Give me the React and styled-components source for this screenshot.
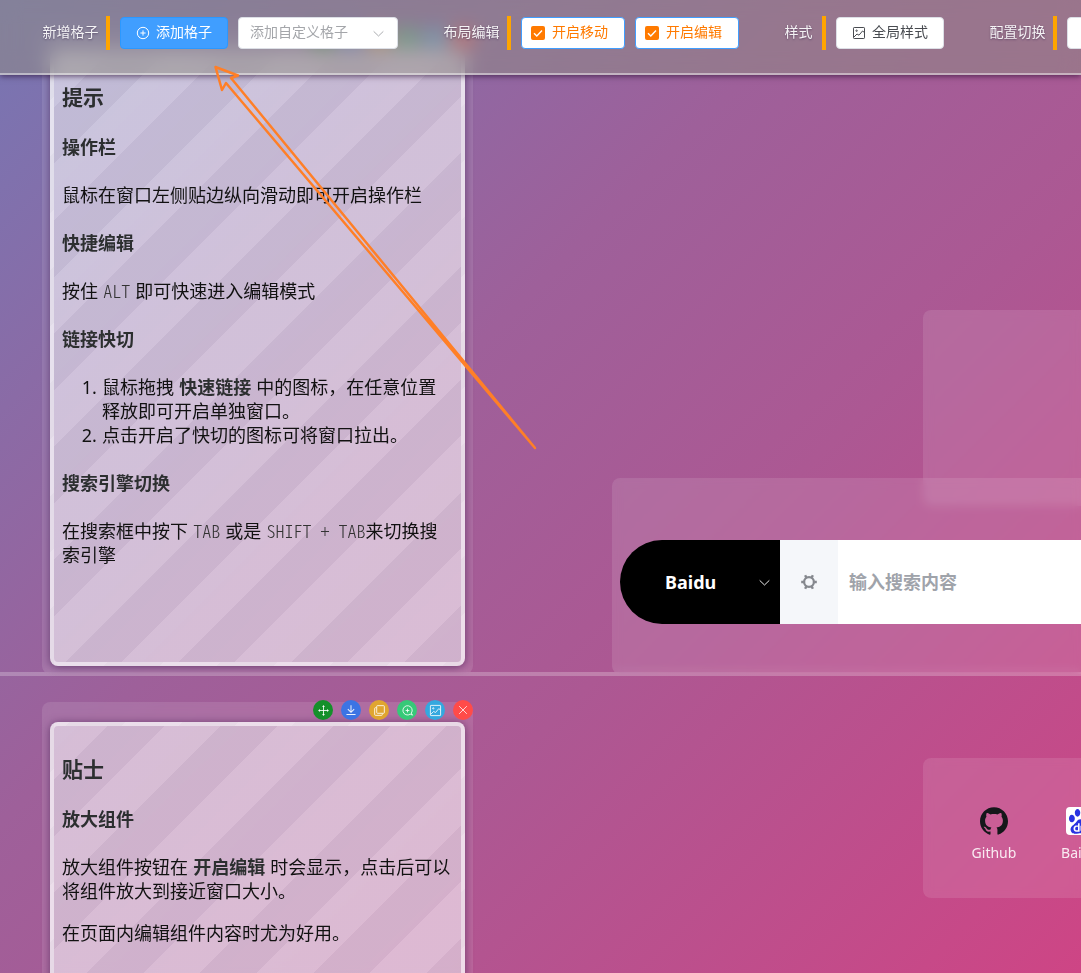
import React from "react";
import styled, { createGlobalStyle } from "styled-components";
import { SiGithub, SiBaidu } from "react-icons/si";

const Global = createGlobalStyle`
  * { box-sizing: border-box; }
  body {
    margin: 0;
    overflow: hidden;
    font-family: "Noto Sans", "Noto Sans CJK SC", sans-serif;
  }
`;

const Page = styled.div`
  position: relative;
  height: 973px;
  overflow: hidden;
  background: linear-gradient(135deg, #7776b3 0%, #8a6ba6 20%, #9e609a 40%, #ac5893 62%, #ce4585 100%);
`;

const Dashboard = styled.main`
  display: grid;
  grid-template-columns: 42px 431px 139px 311px 500px;
  grid-template-rows: 30px 280px 168px 28px 168px 28px 56px 140px 334.5px;
`;

const PageEdge = styled.div`
  grid-column: 1 / -1;
  grid-row: 5 / 7;
  align-self: end;
  height: 4px;
  margin-bottom: 26px;
  background: rgba(255, 255, 255, 0.24);
`;

const Cell = styled.section`
  grid-column: ${(p) => p.$col};
  grid-row: ${(p) => p.$row};
  border-radius: 8px;
  background: rgba(255, 255, 255, 0.11);
  backdrop-filter: blur(5px);
`;

const NoteCell = styled(Cell)`
  position: relative;
  padding: 20px 8px 8px;
`;

const Note = styled.article`
  height: 100%;
  padding: 29px 8px 0;
  border: 4px solid rgba(255, 255, 255, 0.5);
  border-radius: 8px;
  color: #111;
  font-size: 18px;
  line-height: 24px;
  word-spacing: 0.5px;
  box-shadow: 0 1px 8px rgba(50, 15, 65, 0.55);
  background: repeating-linear-gradient(
    -45deg,
    rgba(233, 232, 238, 0.56) 0 40px,
    rgba(250, 250, 253, 0.56) 40px 80px
  );
`;

const NoteTitle = styled.h3`
  margin: 0 0 24px;
  color: #2c2f30;
  font-size: 21px;
  line-height: 28px;
`;

const NoteHeading = styled.h4`
  margin: 24px 0;
  color: #2c2f30;
  font-size: 18px;
  line-height: 24px;
`;

const Paragraph = styled.p`
  margin: 18px 0;
  white-space: nowrap;
`;

const Steps = styled.ol`
  margin: 18px 0;
  padding-left: 40px;
  white-space: nowrap;
`;

const Key = styled.code`
  color: #333;
  font-family: "Noto Sans CJK SC", monospace;
  font-size: 18px;
  font-weight: 300;
  font-feature-settings: "hwid" 1;
  line-height: 0;
  word-spacing: 0;
`;

const Strong = styled.b`
  color: #2c2f30;
`;

const Actions = styled.div`
  position: absolute;
  top: -2px;
  right: 0;
  display: flex;
  gap: 8px;
`;

const Action = styled.span`
  display: flex;
  align-items: center;
  justify-content: center;
  width: 20px;
  height: 20px;
  border-radius: 50%;
  color: rgba(255, 255, 255, 0.9);
  background: ${(p) => p.$color};
`;

const SearchCell = styled(Cell)`
  display: flex;
  align-items: center;
  padding: 12px 8px 0;
`;

const SearchBar = styled.div`
  display: flex;
  flex: 1;
  height: 84px;
  font-size: 18px;
  font-weight: 700;
`;

const Engine = styled.div`
  display: flex;
  align-items: center;
  justify-content: space-between;
  width: 160px;
  padding: 0 9px 0 45px;
  border-radius: 42px 0 0 42px;
  color: #fff;
  background: #000;
`;

const GearBox = styled.div`
  display: flex;
  align-items: center;
  justify-content: center;
  width: 58px;
  color: #85888e;
  background: #f5f7fa;
`;

const Query = styled.div`
  display: flex;
  flex: 1;
  align-items: center;
  padding: 0 0 2px 11px;
  color: #9fa3aa;
  background: #fff;
`;

const LinksCell = styled(Cell)`
  display: flex;
  padding: 49px 28px 0;
`;

const Link = styled.a`
  display: flex;
  flex-direction: column;
  align-items: center;
  gap: 8px;
  width: 86px;
  color: rgba(255, 255, 255, 0.88);
  font-size: 14px;
  line-height: 20px;
`;

const LinkIcon = styled.span`
  display: flex;
  align-items: center;
  justify-content: center;
  width: 28px;
  height: 28px;
  border-radius: 4px;
  color: ${(p) => p.$color};
  background: ${(p) => p.$bg || "transparent"};
`;

const Toolbar = styled.header`
  position: absolute;
  top: 0;
  left: 0;
  z-index: 2;
  display: flex;
  align-items: flex-start;
  gap: 45.5px;
  width: 100%;
  height: 75px;
  padding: 16px 0 0 42.5px;
  border-bottom: 2px solid rgba(255, 255, 255, 0.45);
  background: rgba(143, 139, 133, 0.53);
  backdrop-filter: blur(10px);
  box-shadow: 0 1px 6px rgba(30, 0, 40, 0.65);
  font-size: 14px;
  white-space: nowrap;
`;

const ToolGroup = styled.div`
  display: flex;
  flex: none;
  align-items: center;
  gap: 10px;
  height: 34px;
`;

const GroupLabel = styled.div`
  flex: none;
  width: ${(p) => p.$width}px;
  height: 34px;
  border-right: 4px solid #ffa500;
  color: rgba(255, 255, 255, 0.92);
  line-height: 32px;
  text-shadow: 0 1px 2px rgba(50, 30, 70, 0.5);
`;

const Button = styled.div`
  display: flex;
  flex: none;
  align-items: center;
  justify-content: center;
  gap: 6px;
  width: ${(p) => p.$width || 108}px;
  height: 32px;
  border: 1px solid ${(p) => p.$border || "#dcdfe6"};
  border-radius: 4px;
  color: ${(p) => p.$color || "#484b50"};
  background: ${(p) => p.$bg || "#fff"};
  line-height: 28px;
`;

const Caption = styled.span`
  padding-bottom: 2px;
`;

const ToggleButton = styled(Button)`
  gap: 7px;
  padding-right: 7px;
`;

const Select = styled(Button)`
  justify-content: space-between;
  padding: 0 12px 0 11px;
  color: #a4a6aa;
`;

const Checkbox = styled.span`
  display: flex;
  align-items: center;
  justify-content: center;
  width: 14px;
  height: 14px;
  border-radius: 2px;
  color: #fff;
  background: #ff7a00;
`;

const Arrow = styled.svg`
  position: absolute;
  top: 60px;
  left: 205px;
  z-index: 3;
`;

const Svg = ({ size = 14, w = 1, children }) => (
  <svg width={size} height={size} viewBox="0 0 14 14" fill="none" stroke="currentColor" strokeWidth={w}>
    {children}
  </svg>
);

const PlusCircle = () => (
  <Svg><circle cx="7" cy="7" r="5.7" /><path d="M7 4.4v5.2M4.4 7h5.2" /></Svg>
);
const Chevron = ({ size }) => <Svg size={size}><path d="m1.8 4.7 5.2 5 5.2-5" /></Svg>;
const Picture = ({ size }) => (
  <Svg size={size}>
    <rect x="1.5" y="1.5" width="11" height="11" rx=".7" />
    <circle cx="4.6" cy="4.7" r=".7" />
    <path d="m2 11 3-3 2 1.200L10.500 5l2 1.500" />
  </Svg>
);
const Check = () => <Svg w={1.4}><path d="m3 7.2 2.800 2.700L11 4.500" /></Svg>;
const Move = () => (
  <Svg size={13}>
    <path d="M7 2v10M2 7h10" />
    <path d="m5.5 3.2 1.5-2 1.5 2zM5.5 10.8l1.5 2 1.5-2zM3.2 5.5l-2 1.5 2 1.5zM10.8 5.5l2 1.5-2 1.5z" fill="currentColor" stroke="none" />
  </Svg>
);
const Download = () => <Svg size={12} w={1.2}><path d="M7 1.5v8M3.3 6 7 9.7 10.7 6M1.7 12.2h10.6" /></Svg>;
const Copy = () => (
  <Svg size={13}><rect x="4" y="1.8" width="8.2" height="8.2" rx=".8" /><path d="M3.7 4H2.6q-.8 0-.8.8v6.6q0 .8.8.8h6.6q.8 0 .8-.8v-1" /></Svg>
);
const Zoom = () => (
  <Svg size={13}><path d="M10 10.9A5 5 0 1 1 11.1 9.8L12.4 12l-2.5-1.1M7 5v4M5 7h4" /></Svg>
);
const Close = () => <Svg size={12}><path d="m2.5 2.5 9 9m0-9-9 9" /></Svg>;
const Gear = () => (
  <svg width="18" height="18" viewBox="0 0 18 18" fill="none" stroke="currentColor">
    <circle cx="9" cy="9" r="4.9" strokeWidth="2.3" />
    <path d="M1.200 9h2.300M14.500 9h2.300M5.100 2.200l1.200 2.200M11.700 13.600l1.200 2.200M12.900 2.200l-1.200 2.200M6.300 13.600l-1.200 2.200" strokeWidth="2.400" />
  </svg>
);

const actions = [
  ["#14902a", Move],
  ["#3c74e4", Download],
  ["#e0a530", Copy],
  ["#36c978", Zoom],
  ["#34a8df", Picture],
  ["#ff4b49", Close],
];

const CellActions = () => (
  <Actions>
    {actions.map(([color, Icon]) => (
      <Action key={color} $color={color}><Icon size={13} /></Action>
    ))}
  </Actions>
);

export default function App() {
  return (
    <Page>
      <Global />
      <Dashboard>
        <PageEdge />
        <NoteCell $col="2" $row="2 / 6">
          <Note>
            <NoteTitle>提示</NoteTitle>
            <NoteHeading>操作栏</NoteHeading>
            <Paragraph>鼠标在窗口左侧贴边纵向滑动即可开启操作栏</Paragraph>
            <NoteHeading>快捷编辑</NoteHeading>
            <Paragraph>按住 <Key>ALT</Key> 即可快速进入编辑模式</Paragraph>
            <NoteHeading>链接快切</NoteHeading>
            <Steps>
              <li>鼠标拖拽 <Strong>快速链接</Strong> 中的图标，在任意位置<br />释放即可开启单独窗口。</li>
              <li>点击开启了快切的图标可将窗口拉出。</li>
            </Steps>
            <NoteHeading>搜索引擎切换</NoteHeading>
            <Paragraph>在搜索框中按下 <Key>TAB</Key> 或是 <Key>SHIFT + TAB</Key>来切换搜<br />索引擎</Paragraph>
          </Note>
          <CellActions />
        </NoteCell>
        <NoteCell $col="2" $row="7 / 10">
          <Note>
            <NoteTitle>贴士</NoteTitle>
            <NoteHeading>放大组件</NoteHeading>
            <Paragraph>放大组件按钮在 <Strong>开启编辑</Strong> 时会显示，点击后可以<br />将组件放大到接近窗口大小。</Paragraph>
            <Paragraph>在页面内编辑组件内容时尤为好用。</Paragraph>
          </Note>
          <CellActions />
        </NoteCell>
        <Cell $col="5" $row="3 / 5" />
        <SearchCell $col="4 / 6" $row="4 / 6">
          <SearchBar>
            <Engine>Baidu<Chevron size={13} /></Engine>
            <GearBox><Gear /></GearBox>
            <Query>输入搜索内容</Query>
          </SearchBar>
        </SearchCell>
        <LinksCell $col="5" $row="8">
          <Link><LinkIcon $color="#15171a"><SiGithub size={28} /></LinkIcon>Github</Link>
          <Link><LinkIcon $color="#2932e1" $bg="#fff"><SiBaidu size={25} /></LinkIcon>Baidu</Link>
        </LinksCell>
      </Dashboard>
      <Toolbar>
        <ToolGroup>
          <GroupLabel $width={67.5}>新增格子</GroupLabel>
          <Button $bg="#409eff" $border="#2b98ff" $color="#fff"><PlusCircle /><Caption>添加格子</Caption></Button>
          <Select $width={160}><Caption>添加自定义格子</Caption><Chevron size={13} /></Select>
        </ToolGroup>
        <ToolGroup>
          <GroupLabel $width={67.5}>布局编辑</GroupLabel>
          <ToggleButton $width={104} $border="#409eff" $color="#ff7a00"><Checkbox><Check /></Checkbox><Caption>开启移动</Caption></ToggleButton>
          <ToggleButton $width={104} $border="#409eff" $color="#ff7a00"><Checkbox><Check /></Checkbox><Caption>开启编辑</Caption></ToggleButton>
        </ToolGroup>
        <ToolGroup>
          <GroupLabel $width={41.5}>样式</GroupLabel>
          <Button><Picture /><Caption>全局样式</Caption></Button>
        </ToolGroup>
        <ToolGroup>
          <GroupLabel $width={67.5}>配置切换</GroupLabel>
          <Button />
        </ToolGroup>
      </Toolbar>
      <Arrow width="340" height="400" viewBox="205 60 340 400" fill="none" stroke="#ff7f27" strokeWidth="2.5" strokeLinejoin="round">
        <path d="M535 448 231 78l7-2.500-22.500-8.500L222 90l4-7z" />
      </Arrow>
    </Page>
  );
}
